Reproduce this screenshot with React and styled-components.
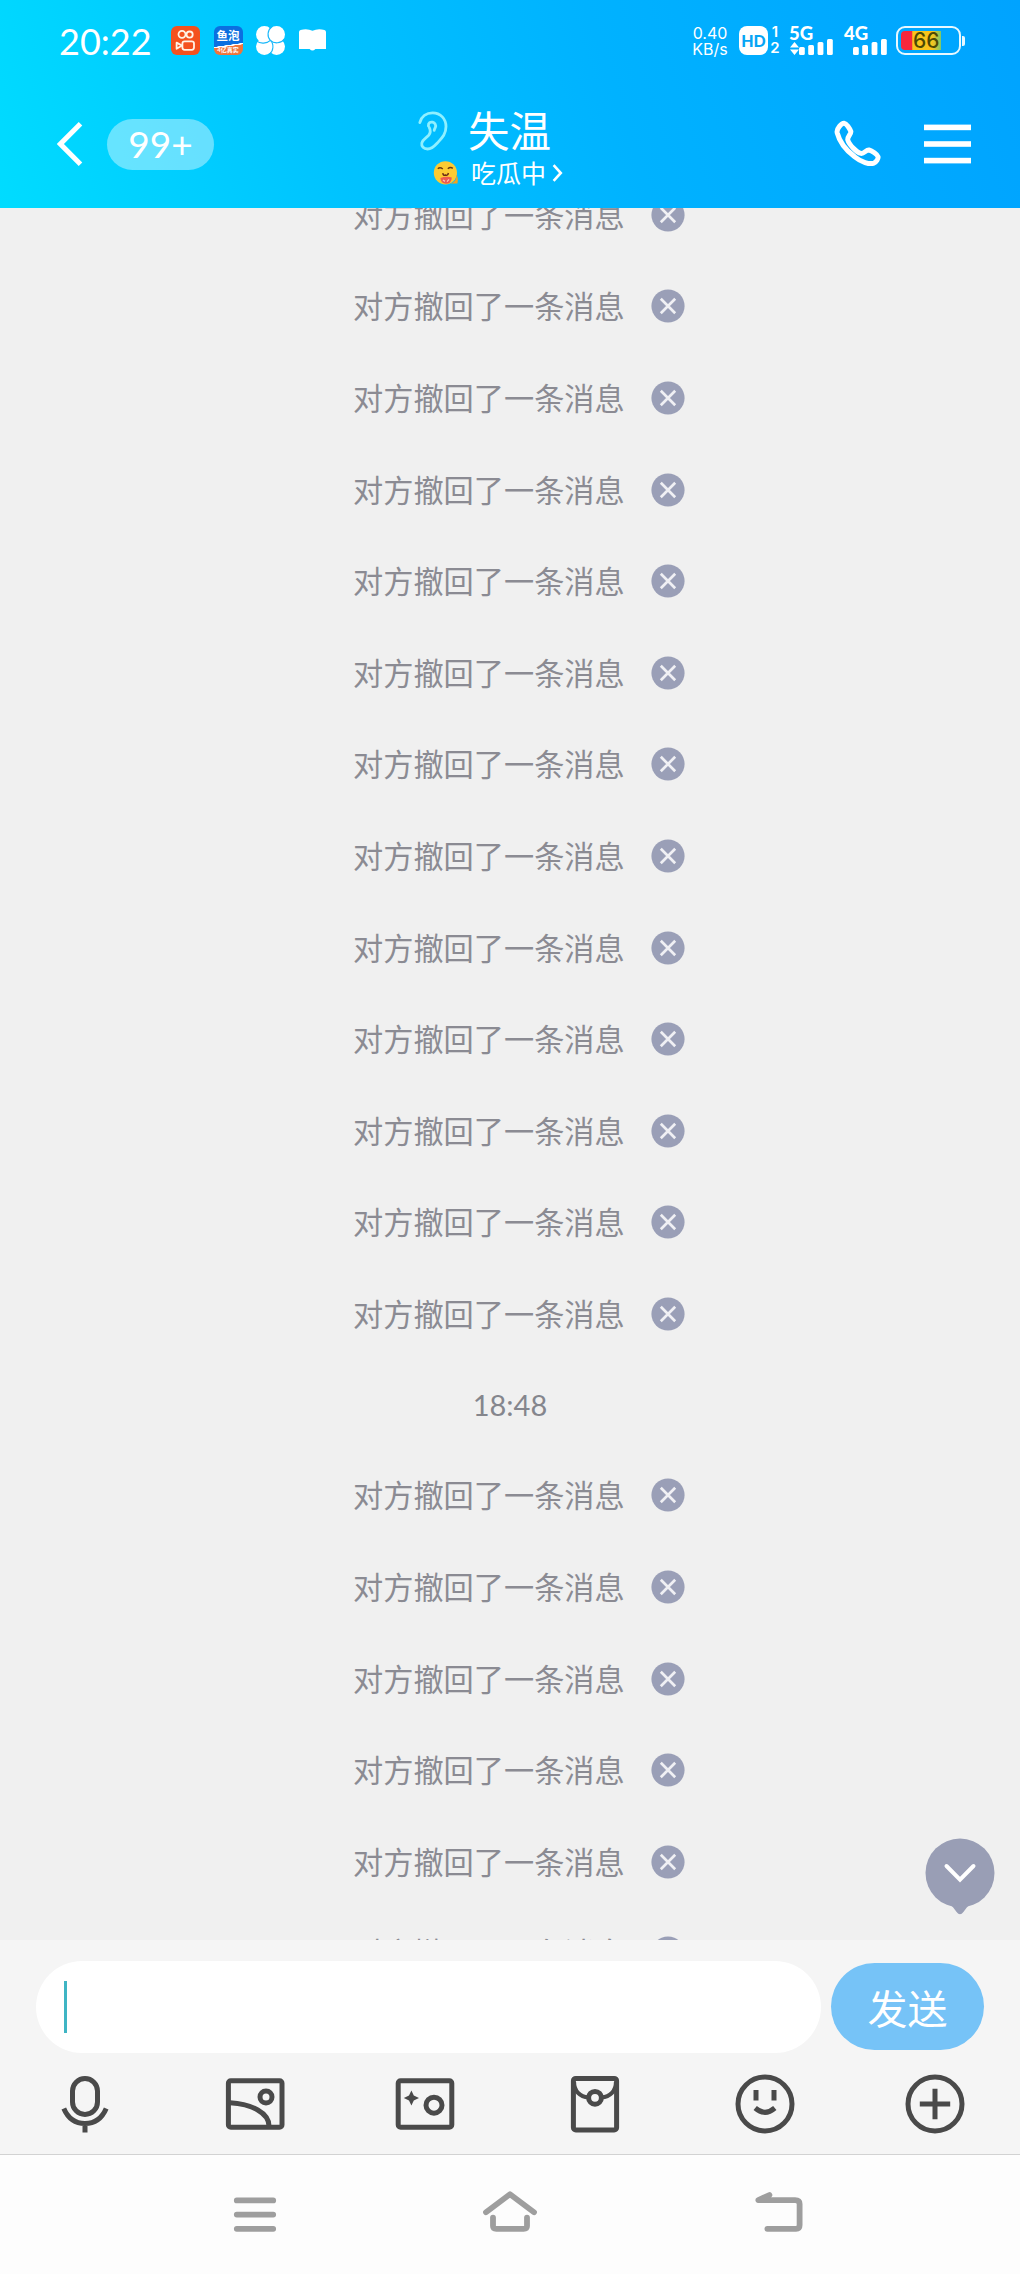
import React from 'react';
import styled, { createGlobalStyle } from 'styled-components';

//-------------------------------------------------------------

const recalled = '对方撤回了一条消息';

const messages = [
  ...Array.from({ length: 13 }, () => ({ type: 'recall', text: recalled })),
  { type: 'time', text: '18:48' },
  ...Array.from({ length: 6 }, () => ({ type: 'recall', text: recalled })),
];

//---------------------- STATUS ICONS ------------------------

const CameraAppIcon = () => (
  <svg width="29" height="29" viewBox="0 0 29 29" fill="none">
    <rect width="29" height="29" rx="6" fill="#f4511e" />
    <g stroke="#fff3e6" strokeWidth="1.8">
      <circle cx="11" cy="8.3" r="3.5" />
      <circle cx="18.6" cy="8.6" r="3.1" />
      <rect x="11.4" y="15.4" width="11.6" height="8.4" rx="2.2" />
      <path d="M11 19.6L5.6 16.6V22.8Z" strokeLinejoin="round" />
    </g>
  </svg>
);

const PinwheelIcon = () => (
  <svg width="29" height="29" viewBox="0 0 29 29">
    <g fill="#fff">
      <circle cx="8.4" cy="8.4" r="8.4" />
      <circle cx="20.6" cy="8.4" r="8.4" />
      <circle cx="20.6" cy="20.6" r="8.4" />
      <circle cx="8.4" cy="20.6" r="8.4" />
    </g>
    <g fill="none" stroke="#19b8fa" strokeWidth="1.1">
      <path d="M14.4 14.4C10.8 11 11.4 4 15.6 1" />
      <path d="M14.4 14.4C18 18 25 17.6 28.2 13.4" />
      <path d="M14.4 14.4C18.2 18 17.6 25 13.4 28.2" />
      <path d="M14.4 14.4C11 17.8 4 18 0.8 15.2" />
    </g>
  </svg>
);

const BookIcon = () => (
  <svg width="27" height="22" viewBox="0 0 27 22" fill="#fff">
    <path d="M0 3Q0 1.4 1.6 1Q8-1 13.5 1.8Q19-1 25.4 1Q27 1.4 27 3V20H16.4Q13.5 23 10.6 20H0Z" />
  </svg>
);

const DataArrows = () => (
  <svg width="9" height="13" viewBox="0 0 9 13" fill="#fff">
    <path d="M0 5.4L4.5 0L9 5.4ZM0 7.6L4.5 13L9 7.6Z" />
  </svg>
);

const SignalBars = () => (
  <svg width="34" height="16" viewBox="0 0 34 16" fill="#fff">
    <rect x="0" y="8" width="5.8" height="8" rx="1.5" />
    <rect x="9.2" y="6" width="5.8" height="10" rx="1.5" />
    <rect x="18.6" y="3" width="5.8" height="13" rx="1.5" />
    <rect x="28" y="0" width="5.8" height="16" rx="1.5" />
  </svg>
);

//---------------------- HEADER ICONS ------------------------

const BackIcon = () => (
  <svg width="26" height="44" viewBox="0 0 26 44" fill="none" stroke="#fff" strokeWidth="5">
    <path d="M23.5 1.8L3.4 22L23.5 42.2" />
  </svg>
);

const EarIcon = () => (
  <svg width="30" height="40" viewBox="0 0 30 40" fill="none" stroke="#8ff0ff" strokeWidth="2.8" strokeLinecap="round">
    <path d="M1.8 11.6C3.4 5.4 8.4 1.8 14.6 1.8C22.6 1.8 28 8 28 15.6C28 22.8 24.4 26.6 20.6 30.6C17 34.4 14.6 38 9.6 38C5.6 38 3.2 35.4 3.8 32C4.6 28.4 8.6 27 10.8 24.2C12.6 21.8 13 19.8 11.2 16.4" />
    <path d="M10.4 14.8C10.2 11.8 12.4 10.6 14.6 11.2C17 11.8 18.2 14 17.4 16.2C17 17.4 16.4 18 16.2 19.4" />
  </svg>
);

const MelonFace = () => (
  <svg width="26" height="24" viewBox="0 0 26 24">
    <circle cx="12.4" cy="11.8" r="11.6" fill="#fccb32" />
    <path d="M17 22.6Q23 22 23.6 14Q25.6 17 24.4 22.6Z" fill="#f6a21d" />
    <path d="M4.8 7.8Q7 5.8 9.8 8M14.8 7.8Q17.4 5.6 19.8 7.4" fill="none" stroke="#6b3a14" strokeWidth="1.5" />
    <path d="M9.8 12.2Q10.2 15 12.4 14Q14.8 15 15.4 12" fill="none" stroke="#6b2d14" strokeWidth="1.5" />
    <path d="M7.4 17Q13 14.6 18.8 16.4Q18.6 22.6 13 22.8Q7.8 22.4 7.4 17Z" fill="#ee5a50" />
    <path d="M10 19L12 20.4M16 18.4L14 20.6" stroke="#ffc2b8" strokeWidth="1.3" />
  </svg>
);

const ChevronRight = () => (
  <svg width="11" height="18" viewBox="0 0 11 18" fill="none" stroke="#fff" strokeWidth="2.6">
    <path d="M1.6 1.2L8.8 9L1.6 16.8" />
  </svg>
);

const PhoneIcon = () => (
  <svg width="48" height="48" viewBox="0 0 48 48" fill="none" stroke="#fff" strokeWidth="5" strokeLinejoin="round">
    <path d="M10.2 3.2C12.4 3.4 15.6 8.4 16.8 11.4C17.6 13.8 13 16.8 13.8 20C15 24.4 22.4 32.4 27 33.4C30 34 32.4 29.4 35 30C38 30.8 43.4 34.4 44 36.6C44.6 38.8 42 42.4 39.8 43.2C35.6 44.6 27.2 42.2 20.4 36.6C12.4 30.4 5.4 21.4 3.2 12.8C2.2 8.4 7.8 3 10.2 3.2Z" />
  </svg>
);

const MenuIcon = () => (
  <svg width="47" height="40" viewBox="0 0 47 40" fill="#fff">
    <rect y="0.6" width="47" height="5.6" />
    <rect y="17.2" width="47" height="5.6" />
    <rect y="33.8" width="47" height="5.6" />
  </svg>
);

//---------------------- CHAT ICONS ------------------------

const CloseIcon = () => (
  <svg width="34" height="34" viewBox="0 0 34 34">
    <circle cx="17" cy="17" r="16.6" fill="#9a9fb7" />
    <path d="M9.8 9.8L24.2 24.2M24.2 9.8L9.8 24.2" stroke="#f0f0f4" strokeWidth="2.7" />
  </svg>
);

const DownBubble = () => (
  <svg width="70" height="78" viewBox="0 0 70 78">
    <circle cx="35" cy="35" r="34.5" fill="#999eb5" />
    <path d="M26 67Q28 69 31.6 74Q35 78.6 38.4 74Q42 69 44 67Z" fill="#999eb5" />
    <path d="M21.5 28L35 41.6L48.5 28" fill="none" stroke="#fff" strokeWidth="4" strokeLinecap="round" />
  </svg>
);

const MicIcon = () => (
  <svg width="60" height="60" viewBox="0 0 60 60">
    <rect x="17.5" y="4.5" width="25" height="36" rx="12.5" />
    <path d="M8.8 34.6C13 44.4 20.6 49.6 30 49.6S47 44.4 51.2 34.6M30 50V58.4" />
  </svg>
);

const PhotoIcon = () => (
  <svg width="60" height="60" viewBox="0 0 60 60">
    <rect x="3.4" y="6.8" width="53.6" height="46.4" rx="2.4" />
    <circle cx="41" cy="23" r="6" />
    <path d="M5 28.8C27 30 44 39 44 52" />
  </svg>
);

const CameraIcon = () => (
  <svg width="60" height="60" viewBox="0 0 60 60">
    <rect x="3.2" y="6.8" width="53.6" height="46.4" rx="2.4" />
    <circle cx="39" cy="31.2" r="8" />
    <path d="M16.4 16.4L18.8 21.6L24 24L18.8 26.4L16.4 31.6L14 26.4L8.8 24L14 21.6Z" fill="#4a4a4a" stroke="none" />
  </svg>
);

const PacketIcon = () => (
  <svg width="60" height="60" viewBox="0 0 60 60">
    <rect x="8.4" y="4.4" width="43.2" height="51.6" rx="2.4" />
    <circle cx="30" cy="23.8" r="6.4" />
    <path d="M9 8C9 17 15 23 23.4 23.4M51 8C51 17 45 23 36.6 23.4" strokeWidth="4.2" />
  </svg>
);

const SmileIcon = () => (
  <svg width="60" height="60" viewBox="0 0 60 60">
    <circle cx="30" cy="30" r="27" />
    <path d="M21 16V26.4M39 16V26.4M20.2 34Q30 42.6 39.8 34" />
  </svg>
);

const PlusIcon = () => (
  <svg width="60" height="60" viewBox="0 0 60 60">
    <circle cx="30" cy="30" r="27" />
    <path d="M30 14.8V45.2M14.8 30H45.2" />
  </svg>
);

const tools = [
  { id: 'mic', Icon: MicIcon },
  { id: 'photo', Icon: PhotoIcon },
  { id: 'camera', Icon: CameraIcon },
  { id: 'packet', Icon: PacketIcon },
  { id: 'smile', Icon: SmileIcon },
  { id: 'plus', Icon: PlusIcon },
];

//---------------------- CHAT ------------------------

const App = () => {
  return (
    <Screen>
      <GlobalStyle />
      <Header>
        <StatusBar>
          <Clock>20:22</Clock>
          <AppIcons>
            <CameraAppIcon />
            <FishApp>
              <FishName>鱼泡</FishName>
              <FishTag>4亿真实</FishTag>
            </FishApp>
            <PinwheelIcon />
            <BookIcon />
          </AppIcons>
          <NetSpeed>
            <span>0.40</span>
            <span>KB/s</span>
          </NetSpeed>
          <HdBadge>HD</HdBadge>
          <SimNumbers>
            <span>1</span>
            <span>2</span>
          </SimNumbers>
          <Signal $width={44} $gap={11}>
            <span>5G</span>
            <Bars>
              <DataArrows />
              <SignalBars />
            </Bars>
          </Signal>
          <Signal $width={43} $gap={9}>
            <span>4G</span>
            <Bars>
              <SignalBars />
            </Bars>
          </Signal>
          <Battery>
            <Charge>66</Charge>
          </Battery>
        </StatusBar>

        <TitleBar>
          <BackIcon />
          <Unread>99+</Unread>
          <Contact>
            <NameRow>
              <EarIcon />
              <Name>失温</Name>
            </NameRow>
            <MoodRow>
              <MelonFace />
              <Mood>吃瓜中</Mood>
              <ChevronRight />
            </MoodRow>
          </Contact>
          <Actions>
            <PhoneIcon />
            <MenuIcon />
          </Actions>
        </TitleBar>
      </Header>

      <Chat>
        <MessageList>
          {messages.map((message, index) => {
            if (message.type === 'time') {
              return <TimeRow key={index}>{message.text}</TimeRow>;
            }
            return (
              <RecallRow key={index}>
                <RecallText>{message.text}</RecallText>
                <CloseIcon />
              </RecallRow>
            );
          })}
        </MessageList>
        <JumpButton>
          <DownBubble />
        </JumpButton>
      </Chat>

      <Composer>
        <InputRow>
          <Input>
            <Caret />
          </Input>
          <Send>发送</Send>
        </InputRow>
        <Toolbar>
          {tools.map(({ id, Icon }) => (
            <Tool key={id}>
              <Icon />
            </Tool>
          ))}
        </Toolbar>
      </Composer>

      <SystemNav>
        <svg width="60" height="60" viewBox="0 0 60 60">
          <path d="M11.8 16.4H48.2M11.8 30.6H48.2M11.8 44.8H48.2" />
        </svg>
        <svg width="60" height="60" viewBox="0 0 60 60">
          <path d="M6 28.2L30 10.2L54 28.2M13 33.6V42Q13 44.8 16.4 44.8H43.6Q47 44.8 47 42V33.6" />
        </svg>
        <svg width="60" height="60" viewBox="0 0 60 60">
          <path d="M23.4 11L12.4 16.2H49Q53.6 16.2 53.6 20V41Q53.6 44.8 50 44.8H21.4" />
        </svg>
      </SystemNav>
    </Screen>
  );
};

//---------------------- STYLE ----------------------

const GlobalStyle = createGlobalStyle`
  body {
    margin: 0;
  }
  * {
    box-sizing: border-box;
  }
  svg {
    display: block;
    flex-shrink: 0;
  }
`;

const Screen = styled.div`
  width: 1020px;
  height: 2274px;
  display: flex;
  flex-direction: column;
  overflow: hidden;
  background: #f0f0f0;
  font-family: Lato, 'Noto Sans CJK SC', sans-serif;
`;

const Header = styled.header`
  height: 208px;
  flex-shrink: 0;
  color: #fff;
  background: linear-gradient(72deg, #00dcff 0%, #00c3ff 32%, #00b2ff 60%, #00a3ff 100%);
`;

const StatusBar = styled.div`
  height: 80px;
  padding: 0 57px 0 59px;
  display: flex;
  align-items: center;
`;

const Clock = styled.div`
  width: 112px;
  font-size: 36px;
  line-height: 40px;
  padding-top: 2px;
`;

const AppIcons = styled.div`
  width: 521px;
  display: flex;
  align-items: center;
  gap: 13.5px;
`;

const FishApp = styled.div`
  width: 29px;
  height: 29px;
  border-radius: 6px;
  overflow: hidden;
  display: flex;
  flex-direction: column;
  align-items: center;
  background: linear-gradient(172deg, #0b6fe0 63%, #fff 64%, #fff 67%, #f0743a 68%);
`;

const FishName = styled.span`
  font-size: 11.5px;
  line-height: 20px;
  font-weight: 700;
  white-space: nowrap;
`;

const FishTag = styled.span`
  font-size: 6px;
  line-height: 8px;
  font-weight: 700;
  white-space: nowrap;
`;

const NetSpeed = styled.div`
  width: 36px;
  margin-right: 11px;
  display: flex;
  flex-direction: column;
  align-items: center;
  font-family: Inter, sans-serif;
  font-size: 16px;
  line-height: 16px;
  white-space: nowrap;
  padding-top: 1px;
`;

const HdBadge = styled.div`
  width: 29px;
  height: 29px;
  border-radius: 8px;
  background: #fff;
  color: #07a5f5;
  font-size: 16px;
  line-height: 29px;
  font-weight: 900;
  text-align: center;
`;

const SimNumbers = styled.div`
  width: 21px;
  padding-left: 2px;
  display: flex;
  flex-direction: column;
  align-items: flex-start;
  font-family: Inter, sans-serif;
  font-size: 15px;
  line-height: 16px;
  font-weight: 600;

  span {
    width: 10px;
    text-align: center;
  }
`;

const Signal = styled.div`
  width: ${(props) => props.$width}px;
  height: 29px;
  margin-right: ${(props) => props.$gap}px;
  display: flex;
  flex-direction: column;
  justify-content: space-between;
  font-size: 18.5px;
  line-height: 14px;
  font-weight: 900;
`;

const Bars = styled.div`
  display: flex;
  justify-content: flex-end;
  align-items: flex-end;
  margin-top: -1px;
`;

const Battery = styled.div`
  width: 65px;
  height: 29px;
  padding: 3px;
  flex-shrink: 0;
  border: 2px solid #e8f8ff;
  border-radius: 9px;
  position: relative;

  &::after {
    content: '';
    position: absolute;
    right: -6px;
    top: 8px;
    width: 3px;
    height: 10px;
    border-radius: 0 2px 2px 0;
    background: #e8f8ff;
  }
`;

const Charge = styled.div`
  width: 40px;
  height: 19px;
  border-radius: 4px 0 0 4px;
  padding-left: 12px;
  background: linear-gradient(90deg, #f7283c 28%, #f9c51d 29%, #f9c51d 78%, #7cc96a 100%);
  color: #4c4a05;
  font-family: Inter, sans-serif;
  font-size: 21px;
  line-height: 19px;
  font-weight: 500;
`;

const TitleBar = styled.div`
  height: 128px;
  padding: 0 49px 0 57px;
  display: flex;
  align-items: center;
`;

const Unread = styled.div`
  width: 107px;
  height: 51px;
  margin-left: 24px;
  border-radius: 26px;
  background: rgba(255, 255, 255, 0.4);
  font-size: 37px;
  line-height: 50px;
  text-align: center;
`;

const Contact = styled.div`
  width: 150px;
  height: 90px;
  margin-left: 204px;
  display: flex;
  flex-direction: column;
`;

const NameRow = styled.div`
  height: 48px;
  display: flex;
  align-items: center;
  gap: 20px;
  margin-top: 8px;
`;

const Name = styled.h1`
  margin: 0;
  font-size: 41.5px;
  line-height: 48px;
  font-weight: 400;
  white-space: nowrap;
`;

const MoodRow = styled.div`
  height: 30px;
  margin-top: 3px;
  padding-left: 15px;
  display: flex;
  align-items: center;
`;

const Mood = styled.span`
  margin: 0 6px 0 12px;
  font-size: 25px;
  line-height: 30px;
  white-space: nowrap;
`;

const Actions = styled.div`
  margin-left: auto;
  display: flex;
  align-items: center;
  gap: 42px;
`;

const Chat = styled.main`
  height: 1732px;
  flex-shrink: 0;
  position: relative;
  overflow: hidden;
`;

const MessageList = styled.div`
  margin-top: -39px;
`;

const RecallRow = styled.div`
  height: 91.6px;
  padding-left: 353px;
  display: flex;
  align-items: center;
  gap: 25px;
`;

const RecallText = styled.span`
  width: 273px;
  padding-bottom: 2px;
  color: #8b8b93;
  font-family: 'Noto Sans CJK SC', sans-serif;
  font-size: 30.2px;
  line-height: 40px;
  white-space: nowrap;
`;

const TimeRow = styled.div`
  height: 89.8px;
  color: #85868d;
  font-size: 29px;
  line-height: 90px;
  text-align: center;
`;

const JumpButton = styled.div`
  position: absolute;
  right: 25px;
  bottom: 24px;
`;

const Composer = styled.footer`
  height: 215px;
  flex-shrink: 0;
  border-bottom: 1px solid #d2d2d2;
  background: #f5f5f5;
`;

const InputRow = styled.div`
  height: 113px;
  padding: 21px 36px 0;
  display: flex;
  align-items: flex-start;
  gap: 10px;
`;

const Input = styled.div`
  width: 785px;
  height: 92px;
  padding-left: 28px;
  border-radius: 46px;
  background: #fff;
  display: flex;
  align-items: center;
`;

const Caret = styled.span`
  width: 3px;
  height: 52px;
  background: #3fb5c4;
`;

const Send = styled.button`
  width: 153px;
  height: 87px;
  margin-top: 2px;
  padding: 0;
  border: none;
  border-radius: 44px;
  background: #76c3f7;
  color: #fff;
  font-family: 'Noto Sans CJK SC', sans-serif;
  font-size: 40px;
`;

const Toolbar = styled.div`
  height: 101px;
  display: grid;
  grid-template-columns: repeat(6, 1fr);
`;

const Tool = styled.div`
  display: flex;
  justify-content: center;
  padding-top: 21px;

  svg {
    fill: none;
    stroke: #4a4a4a;
    stroke-width: 5;
  }
`;

const SystemNav = styled.nav`
  height: 119px;
  flex-shrink: 0;
  background: #fdfdfd;
  display: flex;
  gap: 195px;
  padding: 29px 0 0 225px;

  svg {
    fill: none;
    stroke: #9e9e9e;
    stroke-width: 5.8;
    stroke-linecap: round;
    stroke-linejoin: round;
  }

  svg:last-child {
    margin-left: 11px;
  }
`;

//------------------- EXPORTS --------------------
export default App;
